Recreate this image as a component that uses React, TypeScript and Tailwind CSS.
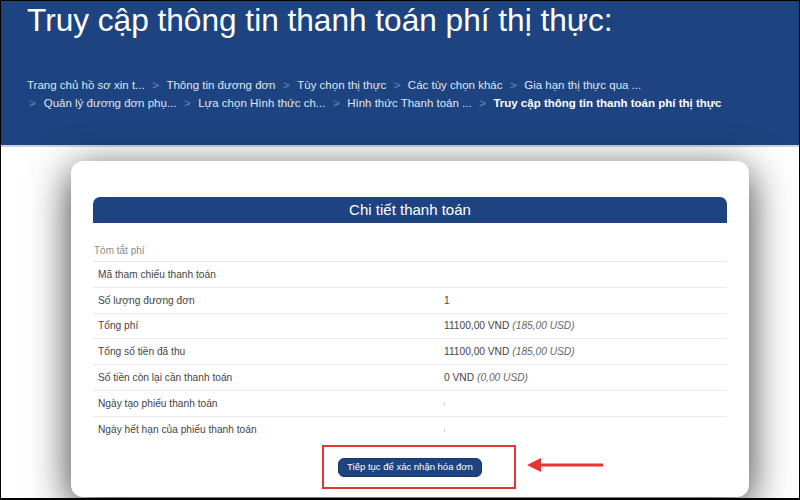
import React from "react";

const crumbsTop = [
  "Trang chủ hồ sơ xin t...",
  "Thông tin đương đơn",
  "Tùy chọn thị thực",
  "Các tùy chọn khác",
  "Gia hạn thị thực qua ...",
];

const crumbsBottom = [
  "Quản lý đương đơn phụ...",
  "Lựa chọn Hình thức ch...",
  "Hình thức Thanh toán ...",
];

type Row = { label: string; amount?: string; usd?: string; empty?: boolean };

const rows: Row[] = [
  { label: "Mã tham chiếu thanh toán" },
  { label: "Số lượng đương đơn", amount: "1" },
  { label: "Tổng phí", amount: "11100,00 VND", usd: "(185,00 USD)" },
  { label: "Tổng số tiền đã thu", amount: "11100,00 VND", usd: "(185,00 USD)" },
  { label: "Số tiền còn lại cần thanh toán", amount: "0 VND", usd: "(0,00 USD)" },
  { label: "Ngày tạo phiếu thanh toán", empty: true },
  { label: "Ngày hết hạn của phiếu thanh toán", empty: true },
];

function Sep() {
  return <span className="mx-[7.5px] text-[#6f8bb5]">&gt;</span>;
}

export default function App() {
  return (
    <div
      className="relative w-[800px] h-[500px] overflow-hidden bg-white border-t border-x border-b-2 border-black"
      style={{ fontFamily: "Arial, 'Liberation Sans', sans-serif" }}
    >
      {/* page header */}
      <header className="h-[146px] bg-[#1d4480] border-b-2 border-[#c9d2df] px-[26px]">
        <h1 className="pt-[1px] text-[31.6px] leading-[36px] text-white">
          Truy cập thông tin thanh toán phí thị thực:
        </h1>
        <nav className="mt-[38px] text-[11.5px] leading-[18px] text-[#dfe6f1]">
          <div className="flex items-center">
            {crumbsTop.map((c, i) => (
              <React.Fragment key={c}>
                {i > 0 && <Sep />}
                <span>{c}</span>
              </React.Fragment>
            ))}
          </div>
          <div className="flex items-center">
            <span className="ml-[2px] mr-[8px] text-[#6f8bb5]">&gt;</span>
            {crumbsBottom.map((c) => (
              <React.Fragment key={c}>
                <span>{c}</span>
                <Sep />
              </React.Fragment>
            ))}
            <span className="font-bold text-white">
              Truy cập thông tin thanh toán phí thị thực
            </span>
          </div>
        </nav>
      </header>

      {/* payment details card */}
      <div className="px-[70px] pt-[14px]">
        <div className="w-[678px] h-[336px] bg-white rounded-[12px] shadow-[0_10px_42px_rgba(0,0,0,0.8)] px-[22px] pt-[36px]">
          <div className="h-[26px] rounded-t-[7px] bg-[#1d4480] flex items-center justify-center text-white text-[15px]">
            Chi tiết thanh toán
          </div>
          <div className="mt-[17px] h-[22px] flex items-center px-[1px] text-[10px] text-[#8a8a8a] border-b border-[#e6e6e6]">
            Tóm tắt phí
          </div>
          {rows.map((r, i) => (
            <div
              key={r.label}
              className={
                i === rows.length - 1
                  ? "grid grid-cols-[346px_1fr] h-[25.8px] items-center px-[5px] text-[10.2px] text-[#444]"
                  : "grid grid-cols-[346px_1fr] h-[25.8px] items-center px-[5px] text-[10.2px] text-[#444] border-b border-[#e9e9e9]"
              }
            >
              <span>{r.label}</span>
              <span>
                {r.amount}
                {r.usd && <i className="ml-[3px] text-[#666]">{r.usd}</i>}
                {r.empty && <span className="inline-block w-[1px] h-[3px] bg-[#cfcfcf] align-middle" />}
              </span>
            </div>
          ))}
          <div className="mt-[15px] flex justify-center">
            <button className="h-[19px] w-[144px] px-0 rounded-[6px] bg-[#1d4480] border border-[#163764] text-white text-[9.5px] leading-none whitespace-nowrap">
              Tiếp tục để xác nhận hóa đơn
            </button>
          </div>
        </div>
      </div>

      {/* highlight box and pointer arrow */}
      <div className="absolute left-[321px] top-[444px] w-[194px] h-[44px] border-2 border-[#e63532]" />
      <svg className="absolute left-[524px] top-[454px]" width="80" height="20" viewBox="0 0 80 20">
        <line x1="12" y1="10" x2="78" y2="10" stroke="#e63532" strokeWidth="3" />
        <polygon points="2,10 16,3 16,17" fill="#e63532" />
      </svg>
    </div>
  );
}
